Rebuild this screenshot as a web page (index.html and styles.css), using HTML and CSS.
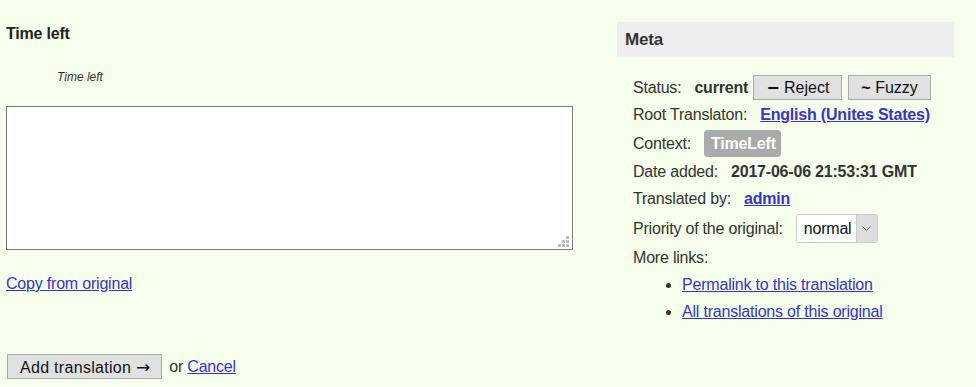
FILE: index.html
```html
<!DOCTYPE html>
<html lang="en">
<head>
  <meta charset="UTF-8">
  <meta name="viewport" content="width=device-width, initial-scale=1.0">
  <title>Time left – translation</title>
  <link rel="stylesheet" href="styles.css">
</head>
<body>
  <div class="editor">
    <div class="strings">
      <h3 class="field-title">Time left</h3>
      <p class="original">Time left</p>

      <div class="textarea-wrap">
        <textarea class="translation" name="translation"></textarea>
        <svg class="grip" width="11" height="11" viewBox="0 0 11 11">
          <rect x="8" y="0" width="3" height="3"/>
          <rect x="4" y="4" width="3" height="3"/>
          <rect x="8" y="4" width="3" height="3"/>
          <rect x="0" y="8" width="3" height="3"/>
          <rect x="4" y="8" width="3" height="3"/>
          <rect x="8" y="8" width="3" height="3"/>
        </svg>
      </div>

      <p class="copy"><a href="#">Copy from original</a></p>

      <div class="actions">
        <button class="btn btn-save" type="button">Add translation <span class="arrow">&rarr;</span></button>
        <span>or <a href="#">Cancel</a></span>
      </div>
    </div>

    <div class="meta">
      <h3 class="meta-title">Meta</h3>
      <dl class="meta-list">
        <div class="meta-row">
          <dt>Status:</dt>
          <dd class="status">
            <strong>current</strong>
            <button class="btn" type="button"><b class="minus">&minus;</b> Reject</button>
            <button class="btn" type="button"><b>~</b> Fuzzy</button>
          </dd>
        </div>
        <div class="meta-row">
          <dt>Root Translaton:</dt>
          <dd><a class="strong-link" href="#">English (Unites States)</a></dd>
        </div>
        <div class="meta-row">
          <dt>Context:</dt>
          <dd><span class="badge">TimeLeft</span></dd>
        </div>
        <div class="meta-row">
          <dt>Date added:</dt>
          <dd><strong>2017-06-06 21:53:31 GMT</strong></dd>
        </div>
        <div class="meta-row">
          <dt>Translated by:</dt>
          <dd><a class="strong-link" href="#">admin</a></dd>
        </div>
        <div class="meta-row">
          <dt>Priority of the original:</dt>
          <dd>
            <span class="select">
              <select name="priority">
                <option>normal</option>
              </select>
              <span class="select-arrow">
                <svg width="9" height="6" viewBox="0 0 9 6"><path d="M0.5 0.5 L4.5 4.5 L8.5 0.5" fill="none" stroke="#555" stroke-width="1"/></svg>
              </span>
            </span>
          </dd>
        </div>
        <div class="meta-row">
          <dt>More links:</dt>
        </div>
      </dl>
      <ul class="more-links">
        <li><a href="#">Permalink to this translation</a></li>
        <li><a href="#">All translations of this original</a></li>
      </ul>
    </div>
  </div>
</body>
</html>
```

FILE: styles.css
```css
body {
  margin: 0;
  padding: 0 6px;
  background-color: #f6ffeb;
  font-family: "Liberation Sans", Arial, sans-serif;
  font-size: 16px;
  letter-spacing: -0.2px;
  color: #333;
}
a {
  color: #3535c8;
}
.editor {
  display: flex;
  align-items: flex-start;
  gap: 44px;
}

/* left side */
.strings {
  width: 567px;
  padding-top: 24px;
}
.field-title {
  margin: 0;
  font-size: 16px;
  line-height: 20px;
  color: #222;
}
.original {
  margin: 26px 0 0 51px;
  font-size: 12px;
  line-height: 14px;
  font-style: italic;
  letter-spacing: 0;
}
.textarea-wrap {
  position: relative;
  margin-top: 22px;
}
.translation {
  display: block;
  width: 100%;
  height: 144px;
  box-sizing: border-box;
  margin: 0;
  padding: 2px;
  border: 1px solid #7a7a7a;
  background: #fff;
  font: inherit;
  resize: none;
}
.grip {
  position: absolute;
  right: 4px;
  bottom: 3px;
  fill: #bbb;
}
.copy {
  margin: 24px 0 0;
  line-height: 20px;
}
.actions {
  margin-top: 60px;
  display: flex;
  align-items: center;
  gap: 7px;
}
.btn {
  height: 25px;
  padding: 0 12px;
  border: 1px solid #aaa;
  border-radius: 0;
  background-color: #e1e1e1;
  color: #111;
  font: inherit;
  letter-spacing: 0;
  cursor: pointer;
}
.btn-save {
  margin-left: 1px;
  padding: 0 11px 0 12px;
  letter-spacing: 0.3px;
}
.arrow {
  font-family: "DejaVu Sans", sans-serif;
  font-size: 17px;
  letter-spacing: 0;
}
.minus {
  font-family: "DejaVu Sans", sans-serif;
}

/* meta panel */
.meta {
  width: 337px;
  padding-top: 22px;
}
.meta-title {
  margin: 0;
  height: 35px;
  line-height: 35px;
  padding: 0 8px;
  background-color: #eee;
  font-size: 17px;
}
.meta-list {
  margin: 18px 0 0;
  padding-left: 16px;
  display: flex;
  flex-direction: column;
  gap: 3px;
}
.meta-row {
  display: flex;
  align-items: center;
  gap: 13px;
  min-height: 24px;
}
.meta-row dt,
.meta-row dd {
  margin: 0;
}
.status {
  display: flex;
  align-items: center;
  gap: 5px;
}
.status .btn + .btn {
  margin-left: 1px;
}
.strong-link {
  font-weight: bold;
}
.badge {
  display: inline-block;
  height: 27px;
  line-height: 27px;
  padding: 0 5px 0 7px;
  border-radius: 4px;
  background-color: #aaa;
  color: #fff;
  font-weight: bold;
}
.select {
  display: inline-flex;
  height: 29px;
  box-sizing: border-box;
  border: 1px solid #ccc;
  border-radius: 3px;
  background: #fff;
  overflow: hidden;
}
.select select {
  appearance: none;
  border: none;
  background: #fff;
  padding: 0 4px 0 7px;
  font: inherit;
  letter-spacing: inherit;
  color: #111;
}
.select-arrow {
  width: 20px;
  display: flex;
  align-items: center;
  justify-content: center;
  border-left: 1px solid #ccc;
  background-color: #ddd;
}
.more-links {
  margin: 3px 0 0;
  padding-left: 65px;
}
.more-links li {
  line-height: 24px;
  margin-bottom: 3px;
}
```
